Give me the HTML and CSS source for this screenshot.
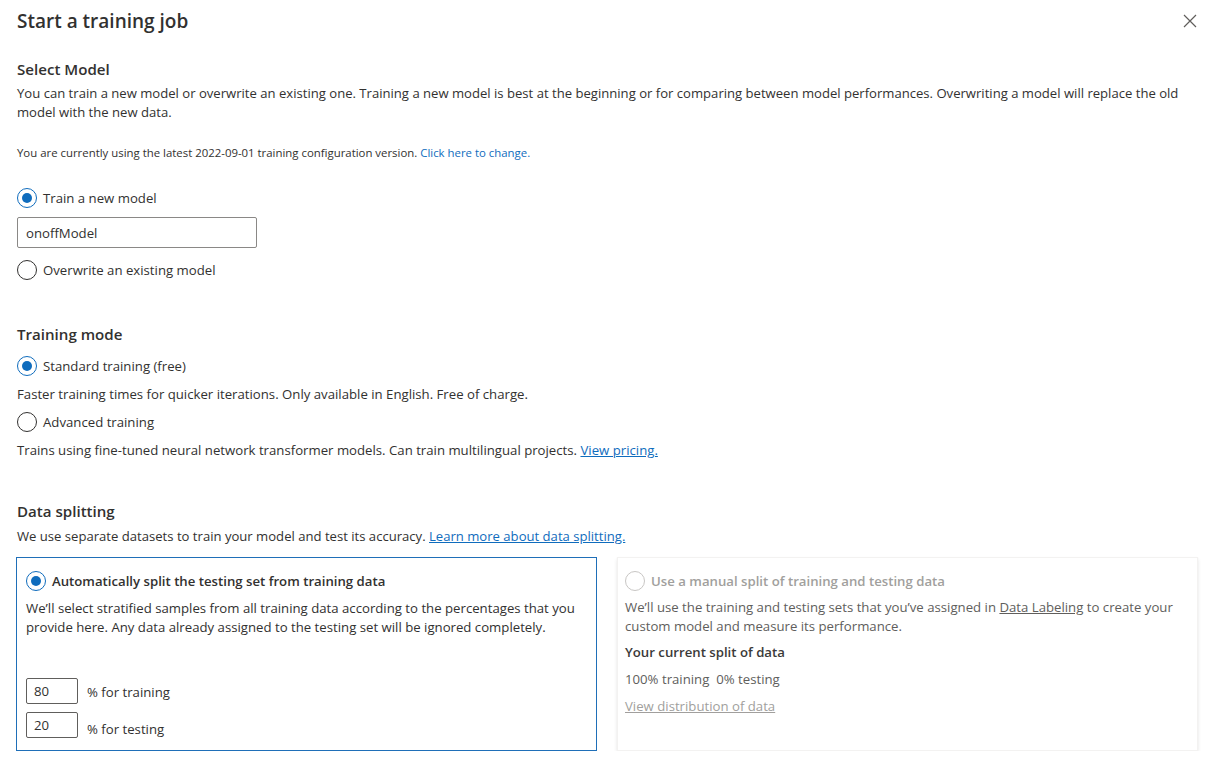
FILE: index.html
```html
<!DOCTYPE html>
<html>
<head>
<meta charset="utf-8">
<link rel="stylesheet" href="styles.css">
</head>
<body>
<div class="panel">
  <header class="head">
    <h1 class="title">Start a training job</h1>
    <button class="close" aria-label="Close">
      <svg width="14" height="14" viewBox="0 0 14 14"><path d="M1 1 L13 13 M13 1 L1 13" stroke="#605e5c" stroke-width="1.2" fill="none"/></svg>
    </button>
  </header>

  <section class="sec sec-model">
    <h2 class="sec-title">Select Model</h2>
    <p class="desc">You can train a new model or overwrite an existing one. Training a new model is best at the beginning or for comparing between model performances. Overwriting a model will replace the old model with the new data.</p>
    <p class="small">You are currently using the latest 2022-09-01 training configuration version. <a class="link-plain" href="#">Click here to change.</a></p>
    <div class="radio-row"><span class="radio checked"></span><span>Train a new model</span></div>
    <div class="text-input">onoffModel</div>
    <div class="radio-row"><span class="radio"></span><span>Overwrite an existing model</span></div>
  </section>

  <section class="sec sec-mode">
    <h2 class="sec-title">Training mode</h2>
    <div class="radio-row"><span class="radio checked"></span><span>Standard training (free)</span></div>
    <p class="opt-desc">Faster training times for quicker iterations. Only available in English. Free of charge.</p>
    <div class="radio-row"><span class="radio"></span><span>Advanced training</span></div>
    <p class="opt-desc">Trains using fine-tuned neural network transformer models. Can train multilingual projects. <a class="link" href="#">View pricing.</a></p>
  </section>

  <section class="sec sec-split">
    <h2 class="sec-title">Data splitting</h2>
    <p class="desc">We use separate datasets to train your model and test its accuracy. <a class="link" href="#">Learn more about data splitting.</a></p>
    <div class="cards">
      <div class="card active">
        <div class="card-head"><span class="radio checked"></span><span>Automatically split the testing set from training data</span></div>
        <p class="card-text">We’ll select stratified samples from all training data according to the percentages that you provide here. Any data already assigned to the testing set will be ignored completely.</p>
        <div class="pct-rows">
          <div class="pct-row"><span class="pct-input">80</span><span class="pct-label">% for training</span></div>
          <div class="pct-row"><span class="pct-input">20</span><span class="pct-label low">% for testing</span></div>
        </div>
      </div>
      <div class="card disabled">
        <div class="card-head"><span class="radio dim"></span><span>Use a manual split of training and testing data</span></div>
        <p class="card-text">We’ll use the training and testing sets that you’ve assigned in <a class="link-gray" href="#">Data Labeling</a> to create your custom model and measure its performance.</p>
        <p class="card-strong">Your current split of data</p>
        <p class="card-line">100% training&nbsp;&nbsp;0% testing</p>
        <p class="card-line"><a class="link-dim" href="#">View distribution of data</a></p>
      </div>
    </div>
  </section>
</div>
</body>
</html>
```

FILE: styles.css
```css
* { box-sizing: border-box; }
html, body { margin: 0; padding: 0; background: #fff; }
body {
  font-family: "Segoe UI", "Open Sans", sans-serif;
  color: #323130;
  font-size: 13.2px;
  overflow: hidden;
}
.panel { padding: 7px 9px 0 17px; width: 1206px; }
.head { display: flex; justify-content: space-between; align-items: center; height: 28px; }
.title { margin: 0; font-size: 19px; font-weight: 600; }
.close { border: 0; background: none; padding: 0; margin-right: 0; display: flex; }
p { margin: 0; }
.sec-title { margin: 0; font-size: 15.1px; font-weight: 600; line-height: 22px; }
.sec-model { margin-top: 23px; }
.desc { font-size: 13.1px; line-height: 19px; margin-top: 4px; }
.small { font-size: 11.4px; margin-top: 23px; line-height: 16px; }
.link-plain { color: #0f6cbd; text-decoration: none; }
.link { color: #0f6cbd; text-decoration: underline; }
.radio-row { display: flex; align-items: center; gap: 6px; height: 20px; font-size: 13.2px; margin-top: 8px; }
.sec-model .radio-row:first-of-type { margin-top: 27px; }
.radio {
  width: 20px; height: 20px; border-radius: 50%;
  border: 1px solid #323130; flex: none; position: relative; background: #fff;
}
.radio.checked { border-color: #0f6cbd; }
.radio.checked::after {
  content: ""; position: absolute; left: 4px; top: 4px; width: 10px; height: 10px;
  border-radius: 50%; background: #0f6cbd;
}
.radio.dim { border-color: #c8c6c4; }
.text-input {
  width: 240px; height: 31px; border: 1px solid #8a8886; border-radius: 2px;
  margin-top: 9px; padding: 0 8px; display: flex; align-items: center; font-size: 13.2px;
}
.text-input + .radio-row { margin-top: 12px; }
.sec-mode { margin-top: 43px; }
.sec-mode .radio-row:first-of-type { margin-top: 11px; }
.opt-desc { font-size: 13.2px; line-height: 19px; margin-top: 9px; }
.opt-desc + .radio-row { margin-top: 8px; }
.sec-split { margin-top: 40px; }
.sec-split .desc { margin-top: 5px; }
.cards { display: flex; gap: 20px; margin-top: 11px; margin-left: -1px; }
.card { flex: none; width: 581px; height: 194px; padding: 13px 9px 12px 9px; display: flex; flex-direction: column; }
.card.active { border: 1px solid #1f6fb8; }
.card.disabled {
  padding-left: 7px;
  border: 1px solid #f3f2f1;
  box-shadow: 0 1.6px 3.6px rgba(0,0,0,0.10), 0 0.3px 0.9px rgba(0,0,0,0.08);
  color: #605e5c;
}
.card-head { display: flex; align-items: center; gap: 6px; font-size: 13.2px; font-weight: 600; height: 20px; }
.card.disabled .card-head { color: #a19f9d; }
.card-text { font-size: 13.2px; line-height: 19px; margin-top: 8px; }
.card.disabled .card-text { margin-top: 7px; }
.pct-rows { margin-top: auto; display: flex; flex-direction: column; gap: 8px; }
.pct-row { display: flex; align-items: center; gap: 9px; font-size: 13.2px; }
.pct-label { margin-top: 2px; }
.pct-label.low { margin-top: 8px; }
.pct-input {
  width: 52px; height: 26px; border: 1px solid #605e5c; border-radius: 2px;
  padding: 0 7px; display: flex; align-items: center;
}
.link-gray { color: #605e5c; text-decoration: underline; }
.card-strong { font-weight: 600; font-size: 13.2px; margin-top: 7px; line-height: 19px; color: #3b3a39; }
.card-line { font-size: 13.2px; margin-top: 8px; line-height: 19px; }
.link-dim { color: #a19f9d; text-decoration: underline; }
```
